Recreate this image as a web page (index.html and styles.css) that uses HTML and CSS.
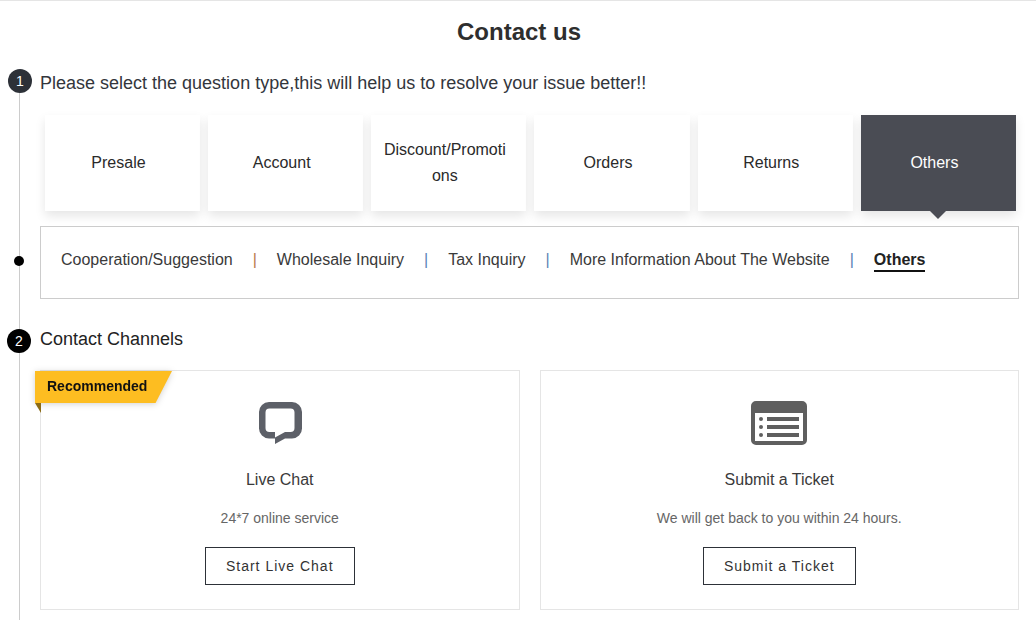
FILE: index.html
```html
<!DOCTYPE html>
<html lang="en">
<head>
<meta charset="utf-8">
<title>Contact us</title>
<link rel="stylesheet" href="styles.css">
</head>
<body>
<main class="page">
  <h1 class="title">Contact us</h1>
  <div class="steps">
    <span class="rail"></span>
    <section class="step-one">
      <span class="num num-dark">1</span>
      <h2 class="question">Please select the question type,this will help us to resolve your issue better!!</h2>
      <div class="tabs">
        <div class="tab">Presale</div>
        <div class="tab">Account</div>
        <div class="tab">Discount/Promotions</div>
        <div class="tab">Orders</div>
        <div class="tab">Returns</div>
        <div class="tab tab-active">Others</div>
      </div>
      <div class="subbox">
        <span class="dot"></span>
        <span class="sub">Cooperation/Suggestion</span>
        <span class="sep sep-orange">|</span>
        <span class="sub">Wholesale Inquiry</span>
        <span class="sep">|</span>
        <span class="sub">Tax Inquiry</span>
        <span class="sep">|</span>
        <span class="sub">More Information About The Website</span>
        <span class="sep">|</span>
        <span class="sub sub-active">Others</span>
      </div>
    </section>
    <section class="step-two">
      <span class="num">2</span>
      <h2 class="channels-title">Contact Channels</h2>
      <div class="cards">
        <article class="card">
          <div class="badge-wrap"><div class="badge">Recommended</div></div>
          <span class="fold"></span>
          <svg class="icon" width="44" height="44" viewBox="0 0 44 44" aria-hidden="true">
            <path fill="#5d6068" fill-rule="evenodd" d="M11 1h23a10 10 0 0 1 10 10v16.5a10 10 0 0 1-10 10h-7L17 43v-5.500H11a10 10 0 0 1-10-10V11A10 10 0 0 1 11 1zM11.500 7.500a4 4 0 0 0-4 4V27a4 4 0 0 0 4 4H17v5.500L27 31h5.500a4 4 0 0 0 4-4V11.500a4 4 0 0 0-4-4z"/>
          </svg>
          <h3 class="card-title">Live Chat</h3>
          <p class="card-text">24*7 online service</p>
          <a class="btn">Start Live Chat</a>
        </article>
        <article class="card">
          <svg class="icon" width="56" height="44" viewBox="0 0 56 44" aria-hidden="true">
            <path fill="#5f5f5f" fill-rule="evenodd" d="M5 0h46a5 5 0 0 1 5 5v34a5 5 0 0 1-5 5H5a5 5 0 0 1-5-5V5a5 5 0 0 1 5-5zM4 12v28h48V12z"/>
            <g fill="#5f5f5f">
              <circle cx="10" cy="18" r="2"/><circle cx="10" cy="26" r="2"/><circle cx="10" cy="34" r="2"/>
              <rect x="16" y="16" width="32" height="4"/><rect x="16" y="24" width="32" height="4"/><rect x="16" y="32" width="32" height="4"/>
            </g>
          </svg>
          <h3 class="card-title">Submit a Ticket</h3>
          <p class="card-text">We will get back to you within 24 hours.</p>
          <a class="btn">Submit a Ticket</a>
        </article>
      </div>
    </section>
  </div>
</main>
</body>
</html>
```

FILE: styles.css
```css
* { box-sizing: border-box; }
html, body { margin: 0; padding: 0; height: 620px; overflow: hidden; background: #fff; }
body { font-family: "Liberation Sans", Arial, sans-serif; color: #222; }

.page { border-top: 1px solid #e5e5e5; height: 620px; overflow: hidden; }
.title { margin: 0; height: 62px; padding-left: 2px; line-height: 62px; font-size: 24px; font-weight: 700; text-align: center; color: #2e2e2e; }

.steps { position: relative; padding: 0 17px 0 40px; }
.rail { position: absolute; left: 19px; top: 20px; bottom: -100px; width: 1px; background: #ccc; }

.step-one, .step-two { position: relative; }
.num { position: absolute; left: -33px; width: 24px; height: 24px; border-radius: 50%; background: #000; color: #fff; font-size: 14px; line-height: 24px; text-align: center; }
.num-dark { left: -32px; background: #2d3138; top: 6px; }
.step-two .num { top: 10px; }

.question { margin: 0; height: 40px; line-height: 40px; font-size: 18px; font-weight: 400; color: #33363c; }

.tabs { display: flex; gap: 8px; margin: 12px 3px 0 4.9px; }
.tab { position: relative; flex: 1 1 0; min-width: 0; height: 96px; display: flex; align-items: center; justify-content: center; padding: 0 18px 0 10px; background: #fff; box-shadow: 0 5px 10px rgba(0, 0, 0, .1); font-size: 16px; line-height: 26px; text-align: center; color: #2a2a2a; word-break: break-all; }
.tab-active { background: #4a4c54; color: #fff; }
.tab-active::after { content: ""; position: absolute; left: 69px; bottom: -8px; border-style: solid; border-width: 8px 8px 0; border-color: #4a4c54 transparent transparent; }

.subbox { position: relative; display: flex; align-items: center; height: 73px; margin-top: 15px; padding: 0 20px 6px; border: 1px solid #ccc; background: #fff; font-size: 16px; color: #3a3a3a; }
.dot { position: absolute; left: -27px; top: 29px; width: 10px; height: 10px; border-radius: 50%; background: #000; }
.sep { margin: 0 20px; color: #5b83b5; }
.sep-orange { color: #b9784a; }
.sub-active { font-weight: 700; color: #222; border-bottom: 2px solid #111; padding-bottom: 1px; margin-top: 3px; }

.step-two { margin-top: 20px; }
.channels-title { margin: 0; height: 40px; line-height: 40px; font-size: 18px; font-weight: 400; color: #222; }

.cards { display: flex; gap: 20px; margin-top: 11px; }
.card { position: relative; flex: 1 1 0; height: 240px; display: flex; flex-direction: column; align-items: center; border: 1px solid #e5e5e5; background: #fff; padding-top: 30px; }
.icon { display: block; flex: none; }
.card-title { margin: 26px 0 0; font-size: 16px; line-height: 18px; font-weight: 400; color: #3a3a3a; }
.card-text { margin: 20px 0 0; font-size: 14px; line-height: 18px; color: #666; }
.btn { display: block; margin-top: 20px; height: 38px; padding: 0 20px; border: 1px solid #2d3138; font-size: 14px; line-height: 36px; letter-spacing: 1px; color: #333; background: #fff; }

.badge-wrap { position: absolute; left: -6px; top: 0; filter: drop-shadow(0 1px 3px rgba(0, 0, 0, .18)); }
.badge { width: 137px; height: 32px; padding-left: 12px; background: #fdbd21; clip-path: polygon(0 0, 100% 0, 88% 100%, 0 100%); font-size: 14px; font-weight: 700; line-height: 31px; color: #111; }
.fold { position: absolute; left: -6px; top: 32px; border-style: solid; border-width: 0 6px 10px 0; border-color: transparent #8a6a14 transparent transparent; }
```
